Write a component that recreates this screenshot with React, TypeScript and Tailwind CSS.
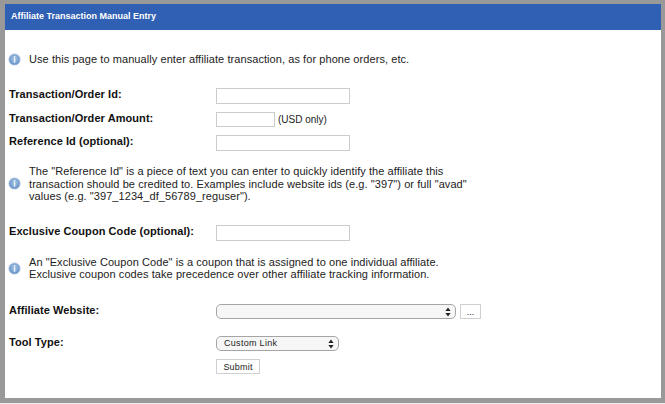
import React from "react";

function Info() {
  return (
    <svg width="13" height="13" viewBox="0 0 13 13" className="shrink-0">
      <defs>
        <radialGradient id="ig" cx="50%" cy="40%" r="60%">
          <stop offset="0%" stopColor="#a9c6e6" />
          <stop offset="100%" stopColor="#5f8fc6" />
        </radialGradient>
      </defs>
      <circle cx="6.5" cy="6.5" r="5.6" fill="url(#ig)" stroke="#a8c0dc" strokeWidth="0.8" />
      <rect x="5.8" y="3" width="1.5" height="1.5" fill="#eef3fa" />
      <rect x="5.8" y="5.2" width="1.5" height="4.6" fill="#eef3fa" />
    </svg>
  );
}

function Label({ children }: { children: React.ReactNode }) {
  return <div className="w-[211px] shrink-0 pl-[4px] -mt-[3px] font-bold text-[11px] leading-[13px] tracking-[0.07px] text-[#111]">{children}</div>;
}

function Arrows() {
  return (
    <svg width="6" height="10" viewBox="0 0 6 10" className="absolute right-[5px] top-[2.5px] pointer-events-none">
      <path d="M3 0.5 L5.6 4 H0.4 Z" fill="#222" />
      <path d="M3 9.5 L5.6 6 H0.4 Z" fill="#222" />
    </svg>
  );
}

function Note({ className, children }: { className: string; children: React.ReactNode }) {
  return (
    <div className={`${className} flex items-center pl-[3px] text-[11px] leading-[12.5px] tracking-[0.07px] text-[#222]`}>
      <Info />
      <div className="ml-[8px]">{children}</div>
    </div>
  );
}

export default function App() {
  return (
    <div className="w-[665px] h-[404px] bg-[#ececec] font-['Liberation_Sans',Arial,sans-serif]">
      <div className="h-[403px] bg-[#999999] pt-[4px] pl-[5px] pr-[4px]">
        <div className="h-[394px] bg-white flex flex-col">
          <div className="h-[26px] shrink-0 bg-[#3060b4] flex items-center pl-[6px] pb-[1px] text-white font-bold text-[9px]">
            Affiliate Transaction Manual Entry
          </div>
          <Note className="mt-[22px] h-[14px]">
            Use this page to manually enter affiliate transaction, as for phone orders, etc.
          </Note>
          <div className="mt-[22px] flex items-center">
            <Label>Transaction/Order Id:</Label>
            <input type="text" className="block w-[134px] h-[16px] border border-[#cccccc] bg-white" />
          </div>
          <div className="mt-[8px] flex items-center">
            <Label>Transaction/Order Amount:</Label>
            <input type="text" className="block w-[59px] h-[15px] border border-[#cccccc] bg-white" />
            <span className="ml-[3px] text-[10px] leading-[12px] text-[#222]">(USD only)</span>
          </div>
          <div className="mt-[8px] flex items-center">
            <Label>Reference Id (optional):</Label>
            <input type="text" className="block w-[134px] h-[16px] border border-[#cccccc] bg-white" />
          </div>
          <Note className="mt-[14px]">
            The "Reference Id" is a piece of text you can enter to quickly identify the affiliate this
            <br />
            transaction should be credited to. Examples include website ids (e.g. "397") or full "avad"
            <br />
            values (e.g. "397_1234_df_56789_reguser").
          </Note>
          <div className="mt-[22.5px] flex items-center">
            <Label>Exclusive Coupon Code (optional):</Label>
            <input type="text" className="block w-[134px] h-[16px] border border-[#cccccc] bg-white" />
          </div>
          <Note className="mt-[14.5px]">
            An "Exclusive Coupon Code" is a coupon that is assigned to one individual affiliate.
            <br />
            Exclusive coupon codes take precedence over other affiliate tracking information.
          </Note>
          <div className="mt-[23.5px] flex items-center">
            <Label>Affiliate Website:</Label>
            <div className="relative w-[240px] h-[15px]">
              <select className="block appearance-none w-full h-full rounded-[5px] border border-[#a5a5a5] bg-[#f6f6f6]" />
              <Arrows />
            </div>
            <button className="ml-[4px] w-[21px] h-[15px] border border-[#d0d0d0] bg-white text-[9px] leading-[10px] text-[#222]">...</button>
          </div>
          <div className="mt-[17px] flex items-center">
            <Label>Tool Type:</Label>
            <div className="relative w-[123px] h-[15px]">
              <select defaultValue="Custom Link" className="block appearance-none w-full h-full rounded-[5px] border border-[#a5a5a5] bg-[#f6f6f6] pl-[7px] text-[9px] leading-[13px] tracking-[0.3px] text-[#222]">
                <option>Custom Link</option>
              </select>
              <Arrows />
            </div>
          </div>
          <div className="mt-[8px] pl-[211px]">
            <button className="block w-[44px] h-[15px] border border-[#d0d0d0] bg-white text-[9px] leading-[12px] tracking-[0.2px] text-[#222]">Submit</button>
          </div>
        </div>
      </div>
    </div>
  );
}
